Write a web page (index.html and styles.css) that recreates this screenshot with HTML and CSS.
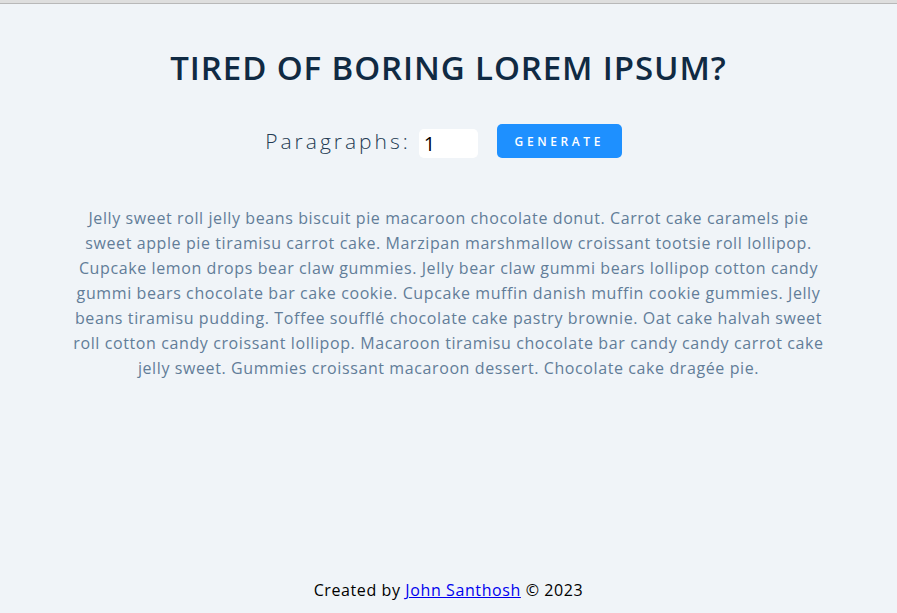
FILE: index.html
```html
<!DOCTYPE html>
<html lang="en">
<head>
<meta charset="utf-8">
<title>Lorem Ipsum Generator</title>
<link rel="stylesheet" href="styles.css">
</head>
<body>
<div class="topbar"></div>
<main class="page">
  <section class="center">
    <h1 class="title">TIRED OF BORING LOREM IPSUM?</h1>
    <form class="form">
      <label class="label" for="amount">Paragraphs:</label>
      <input class="amount" id="amount" type="number" value="1">
      <button class="btn" type="button">GENERATE</button>
    </form>
    <article class="text">
      <p>Jelly sweet roll jelly beans biscuit pie macaroon chocolate donut. Carrot cake caramels pie sweet apple pie tiramisu carrot cake. Marzipan marshmallow croissant tootsie roll lollipop. Cupcake lemon drops bear claw gummies. Jelly bear claw gummi bears lollipop cotton candy gummi bears chocolate bar cake cookie. Cupcake muffin danish muffin cookie gummies. Jelly beans tiramisu pudding. Toffee soufflé chocolate cake pastry brownie. Oat cake halvah sweet roll cotton candy croissant lollipop. Macaroon tiramisu chocolate bar candy candy carrot cake jelly sweet. Gummies croissant macaroon dessert. Chocolate cake dragée pie.</p>
    </article>
  </section>
  <footer class="footer">Created by <a href="#" class="link">John Santhosh</a> © 2023</footer>
</main>
</body>
</html>
```
FILE: styles.css
```css
* { box-sizing: border-box; }
html, body { margin: 0; padding: 0; }
body {
  background: #f0f4f8;
  font-family: "Open Sans", "DejaVu Sans", sans-serif;
  color: #102a43;
}
.topbar {
  height: 4px;
  background: #dedede;
  border-bottom: 1px solid #b8b8b8;
}
.page {
  min-height: calc(100vh - 4px);
  display: flex;
  flex-direction: column;
  align-items: center;
}
.center {
  display: flex;
  flex-direction: column;
  align-items: center;
  padding-top: 43px;
}
.title {
  margin: 0;
  font-size: 33px;
  font-weight: 600;
  letter-spacing: 0.9px;
  line-height: 42px;
  color: #102a43;
}
.form {
  display: flex;
  align-items: center;
  margin-top: 35px;
  margin-right: 10px;
}
.label {
  font-size: 21px;
  font-weight: 300;
  letter-spacing: 3px;
  color: #243b53;
  margin-right: 8px;
}
.amount {
  width: 59px;
  height: 29px;
  border: none;
  border-radius: 5px;
  background: #fff;
  font-family: "Open Sans", sans-serif;
  font-size: 20px;
  padding: 0 5px;
  color: #000;
  margin-top: 4px;
}
.amount::-webkit-inner-spin-button { -webkit-appearance: none; }
.btn {
  margin-left: 19px;
  width: 125px;
  height: 34px;
  border: none;
  border-radius: 5px;
  background: #1e90ff;
  color: #fff;
  font-family: "Open Sans", sans-serif;
  font-size: 12px;
  font-weight: 600;
  letter-spacing: 3.6px;
}
.text {
  width: 752px;
  margin-top: 48px;
}
.text p {
  margin: 0;
  text-align: center;
  font-size: 16px;
  line-height: 25px;
  letter-spacing: 0.6px;
  color: #627d98;
  font-weight: 400;
}
.footer {
  margin-top: auto;
  padding-bottom: 12px;
  font-size: 16px;
  letter-spacing: 0.6px;
  color: #000;
}
.link { color: #0000ee; }
```
